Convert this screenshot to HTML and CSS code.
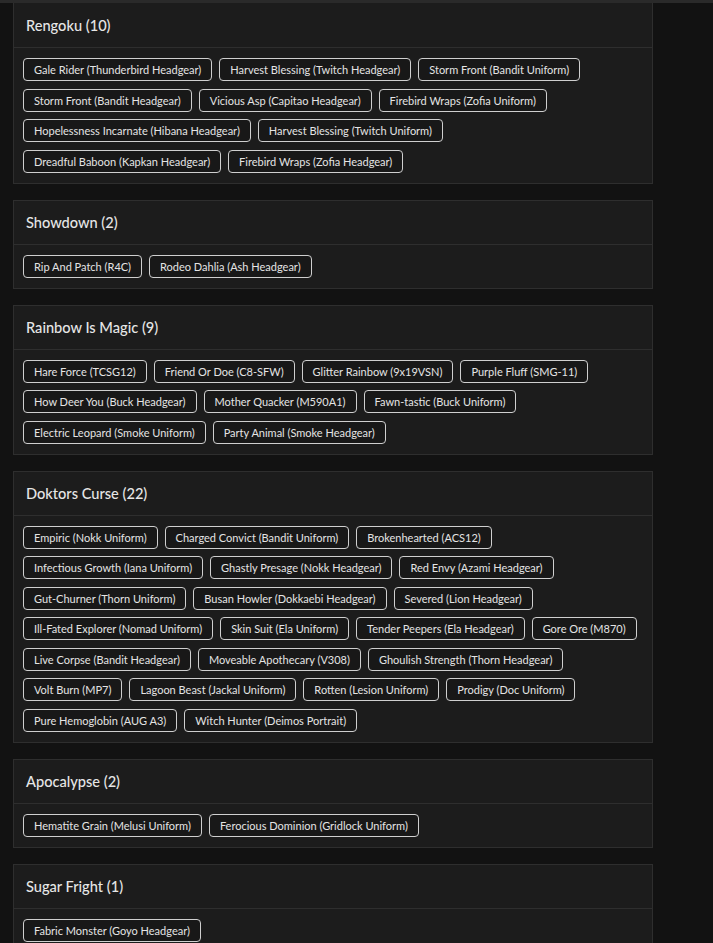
FILE: index.html
```html
<!DOCTYPE html>
<html lang="en">
<head>
<meta charset="utf-8">
<title>Collections</title>
<link rel="stylesheet" href="styles.css">
</head>
<body>
<div class="page">
  <section class="card">
    <h2 class="card-title">Rengoku (10)</h2>
    <div class="tags">
      <span class="tag">Gale Rider (Thunderbird Headgear)</span>
      <span class="tag">Harvest Blessing (Twitch Headgear)</span>
      <span class="tag">Storm Front (Bandit Uniform)</span>
      <span class="tag">Storm Front (Bandit Headgear)</span>
      <span class="tag">Vicious Asp (Capitao Headgear)</span>
      <span class="tag">Firebird Wraps (Zofia Uniform)</span>
      <span class="tag">Hopelessness Incarnate (Hibana Headgear)</span>
      <span class="tag">Harvest Blessing (Twitch Uniform)</span>
      <span class="tag">Dreadful Baboon (Kapkan Headgear)</span>
      <span class="tag">Firebird Wraps (Zofia Headgear)</span>
    </div>
  </section>
  <section class="card">
    <h2 class="card-title">Showdown (2)</h2>
    <div class="tags">
      <span class="tag">Rip And Patch (R4C)</span>
      <span class="tag">Rodeo Dahlia (Ash Headgear)</span>
    </div>
  </section>
  <section class="card">
    <h2 class="card-title">Rainbow Is Magic (9)</h2>
    <div class="tags">
      <span class="tag">Hare Force (TCSG12)</span>
      <span class="tag">Friend Or Doe (C8-SFW)</span>
      <span class="tag">Glitter Rainbow (9x19VSN)</span>
      <span class="tag">Purple Fluff (SMG-11)</span>
      <span class="tag">How Deer You (Buck Headgear)</span>
      <span class="tag">Mother Quacker (M590A1)</span>
      <span class="tag">Fawn-tastic (Buck Uniform)</span>
      <span class="tag">Electric Leopard (Smoke Uniform)</span>
      <span class="tag">Party Animal (Smoke Headgear)</span>
    </div>
  </section>
  <section class="card">
    <h2 class="card-title">Doktors Curse (22)</h2>
    <div class="tags">
      <span class="tag">Empiric (Nokk Uniform)</span>
      <span class="tag">Charged Convict (Bandit Uniform)</span>
      <span class="tag">Brokenhearted (ACS12)</span>
      <span class="tag">Infectious Growth (Iana Uniform)</span>
      <span class="tag">Ghastly Presage (Nokk Headgear)</span>
      <span class="tag">Red Envy (Azami Headgear)</span>
      <span class="tag">Gut-Churner (Thorn Uniform)</span>
      <span class="tag">Busan Howler (Dokkaebi Headgear)</span>
      <span class="tag">Severed (Lion Headgear)</span>
      <span class="tag">Ill-Fated Explorer (Nomad Uniform)</span>
      <span class="tag">Skin Suit (Ela Uniform)</span>
      <span class="tag">Tender Peepers (Ela Headgear)</span>
      <span class="tag">Gore Ore (M870)</span>
      <span class="tag">Live Corpse (Bandit Headgear)</span>
      <span class="tag">Moveable Apothecary (V308)</span>
      <span class="tag">Ghoulish Strength (Thorn Headgear)</span>
      <span class="tag">Volt Burn (MP7)</span>
      <span class="tag">Lagoon Beast (Jackal Uniform)</span>
      <span class="tag">Rotten (Lesion Uniform)</span>
      <span class="tag">Prodigy (Doc Uniform)</span>
      <span class="tag">Pure Hemoglobin (AUG A3)</span>
      <span class="tag">Witch Hunter (Deimos Portrait)</span>
    </div>
  </section>
  <section class="card">
    <h2 class="card-title">Apocalypse (2)</h2>
    <div class="tags">
      <span class="tag">Hematite Grain (Melusi Uniform)</span>
      <span class="tag">Ferocious Dominion (Gridlock Uniform)</span>
    </div>
  </section>
  <section class="card">
    <h2 class="card-title">Sugar Fright (1)</h2>
    <div class="tags">
      <span class="tag">Fabric Monster (Goyo Headgear)</span>
    </div>
  </section>
</div>
</body>
</html>
```

FILE: styles.css
```css
html, body {
  margin: 0;
  padding: 0;
}

body {
  background: #121212;
  color: #e2e2e2;
  font-family: "Lato", "Open Sans", "Liberation Sans", sans-serif;
  border-top: 3px solid #2a2a2a;
  min-height: 940px;
}

.page {
  width: 640px;
  padding: 0 0 0 13px;
  display: flex;
  flex-direction: column;
  gap: 16px;
}

.card {
  background: #1c1c1c;
  border: 1px solid #2e2e2e;
}

.card:first-child {
  border-top: none;
}

.card-title {
  margin: 0;
  padding: 12px 12px 11px;
  font-size: 14.6px;
  line-height: 20px;
  font-weight: 500;
  color: #e6e6e6;
  border-bottom: 1px solid #2e2e2e;
}

.card:first-child .card-title {
  padding-top: 13px;
}

.tags {
  display: flex;
  flex-wrap: wrap;
  gap: 7.5px 7px;
  padding: 10px 9px 10px 9px;
}

.tag {
  display: inline-block;
  font-size: 11px;
  line-height: 15px;
  padding: 3px 10px;
  border: 1px solid #cfcfcf;
  border-radius: 4px;
  color: #e4e4e4;
  background: #181818;
  white-space: nowrap;
}
```
